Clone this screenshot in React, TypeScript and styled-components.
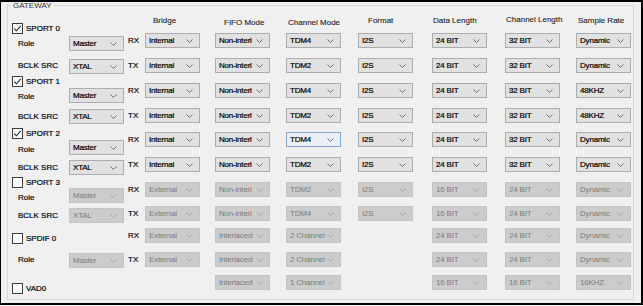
import styled, { createGlobalStyle } from 'styled-components'

const GlobalStyle = createGlobalStyle`
  html, body { margin: 0; padding: 0; background: #fff; }
  body { font-family: "Liberation Sans", Arial, sans-serif; }
`

const Frame = styled.div`
  box-sizing: border-box;
  width: 643px;
  height: 305px;
  border: 2px solid #000;
  border-left-width: 1px;
  background: #f0f0f0;
  padding: 3px 0 0 6px;
  font-size: 8px;
  color: #000;
  -webkit-text-stroke: 0.2px currentColor;
`

const GroupBox = styled.div`
  position: relative;
  box-sizing: border-box;
  width: 627px;
  height: 295px;
  border: 1px solid #d7d7d7;
  display: flex;
  padding-left: 4px;
`

const GroupTitle = styled.span`
  position: absolute;
  top: -4px;
  left: 3px;
  padding: 0 2px;
  line-height: 8px;
  background: #f0f0f0;
  color: #333;
  -webkit-text-stroke: 0;
`

const LeftPanel = styled.div`
  width: 112px;
  display: flex;
  flex-direction: column;
`

const CheckRow = styled.label<{ $mt: number }>`
  display: flex;
  align-items: center;
  gap: 3px;
  height: 11px;
  margin-top: ${p => p.$mt}px;
  font-size: 8px;
`

const Box = styled.span`
  box-sizing: border-box;
  width: 11px;
  height: 11px;
  border: 1px solid #3c3c3c;
  background: #fff;
  display: flex;
  align-items: center;
  justify-content: center;
`

const OptionRow = styled.div<{ $mt: number }>`
  display: flex;
  align-items: center;
  height: 15px;
  margin-top: ${p => p.$mt}px;
`

const OptionLabel = styled.span<{ $ly: number }>`
  width: 57px;
  box-sizing: border-box;
  padding-left: 6px;
  position: relative;
  top: ${p => p.$ly}px;
`

const Select = styled.div<{ $off?: boolean; $focus?: boolean }>`
  box-sizing: border-box;
  width: 55px;
  height: 15px;
  padding: 0 6px 0 3px;
  display: flex;
  align-items: center;
  justify-content: space-between;
  gap: 2px;
  white-space: nowrap;
  overflow: hidden;
  letter-spacing: -0.2px;
  background: ${p => (p.$off ? '#cccccc' : p.$focus ? '#eaf0f6' : '#e1e1e1')};
  border: 1px solid ${p => (p.$off ? '#c4c4c4' : p.$focus ? '#86a9d2' : '#adadad')};
  color: ${p => (p.$off ? '#7c7c7c' : '#000')};
  -webkit-text-stroke: ${p => (p.$off ? '0' : '0.2px currentColor')};
  svg {
    flex: none;
    stroke: ${p => (p.$off ? '#a8a8a8' : '#707070')};
  }
`

const RightPanel = styled.div`
  display: grid;
  grid-template-columns: 21px 70px 71px 72px 74px 73px 71px 55px;
  grid-template-rows: 27px 25px 25px 25px 24px 25px 25px 24px 22px 24px 23px 15px;
`

const Header = styled.div<{ $dx: number; $dy: number }>`
  padding: ${p => p.$dy}px 0 0 ${p => p.$dx}px;
  line-height: 10px;
  white-space: nowrap;
  color: #1a1a1a;
  -webkit-text-stroke: 0.1px currentColor;
`

const IoLabel = styled.div`
  padding-left: 4px;
  height: 15px;
  line-height: 15px;
`

const Chevron = () => (
  <svg width="7" height="4" viewBox="0 0 7 4" fill="none" strokeWidth="1">
    <polyline points="0.5,0.5 3.5,3.5 6.5,0.5" />
  </svg>
)

const Check = () => (
  <svg width="9" height="9" viewBox="0 0 9 9" fill="none" stroke="#222" strokeWidth="1.1">
    <polyline points="1.2,4.6 3.4,6.8 7.8,1.8" />
  </svg>
)

const Dropdown = ({ value, off, focus }: { value: string; off?: boolean; focus?: boolean }) => (
  <Select $off={off} $focus={focus}>
    <span>{value}</span>
    <Chevron />
  </Select>
)

type LeftItem =
  | { kind: 'check'; label: string; checked: boolean; mt: number }
  | { kind: 'opt'; label: string; value: string; off?: boolean; mt: number; ly?: number }

const LEFT: LeftItem[] = [
  { kind: 'check', label: 'SPORT 0', checked: true, mt: 17 },
  { kind: 'opt', label: 'Role', value: 'Master', mt: 2 },
  { kind: 'opt', label: 'BCLK SRC', value: 'XTAL', mt: 8, ly: -1 },
  { kind: 'check', label: 'SPORT 1', checked: true, mt: 2 },
  { kind: 'opt', label: 'Role', value: 'Master', mt: 1, ly: 1 },
  { kind: 'opt', label: 'BCLK SRC', value: 'XTAL', mt: 6 },
  { kind: 'check', label: 'SPORT 2', checked: true, mt: 4 },
  { kind: 'opt', label: 'Role', value: 'Master', mt: 1, ly: 2 },
  { kind: 'opt', label: 'BCLK SRC', value: 'XTAL', mt: 5 },
  { kind: 'check', label: 'SPORT 3', checked: false, mt: 2 },
  { kind: 'opt', label: 'Role', value: 'Master', off: true, mt: 0, ly: 2 },
  { kind: 'opt', label: 'BCLK SRC', value: 'XTAL', off: true, mt: 5 },
  { kind: 'check', label: 'SPDIF 0', checked: false, mt: 10 },
  { kind: 'opt', label: 'Role', value: 'Master', off: true, mt: 9, ly: -1 },
  { kind: 'check', label: 'VAD0', checked: false, mt: 15 },
]

const HEADERS = [
  { text: 'Bridge', dx: 8, dy: 10 },
  { text: 'FIFO Mode', dx: 9, dy: 12 },
  { text: 'Channel Mode', dx: 2, dy: 12 },
  { text: 'Format', dx: 10, dy: 10 },
  { text: 'Data Length', dx: 1, dy: 10 },
  { text: 'Channel Length', dx: 1, dy: 9 },
  { text: 'Sample Rate', dx: 2, dy: 10 },
]

type Row = { io?: string; off?: boolean; focus?: number; cells: (string | null)[] }

const ROWS: Row[] = [
  { io: 'RX', cells: ['Internal', 'Non-interl', 'TDM4', 'I2S', '24 BIT', '32 BIT', 'Dynamic'] },
  { io: 'TX', cells: ['Internal', 'Non-interl', 'TDM2', 'I2S', '24 BIT', '32 BIT', 'Dynamic'] },
  { io: 'RX', cells: ['Internal', 'Non-interl', 'TDM4', 'I2S', '24 BIT', '32 BIT', '48KHZ'] },
  { io: 'TX', cells: ['Internal', 'Non-interl', 'TDM2', 'I2S', '24 BIT', '32 BIT', '48KHZ'] },
  { io: 'RX', focus: 2, cells: ['Internal', 'Non-interl', 'TDM4', 'I2S', '24 BIT', '32 BIT', 'Dynamic'] },
  { io: 'TX', cells: ['Internal', 'Non-interl', 'TDM2', 'I2S', '24 BIT', '32 BIT', 'Dynamic'] },
  { io: 'RX', off: true, cells: ['External', 'Non-interl', 'TDM2', 'I2S', '16 BIT', '24 BIT', 'Dynamic'] },
  { io: 'TX', off: true, cells: ['External', 'Non-interl', 'TDM4', 'I2S', '16 BIT', '24 BIT', 'Dynamic'] },
  { io: 'RX', off: true, cells: ['External', 'Interlaced', '2 Channel', null, '24 BIT', '24 BIT', 'Dynamic'] },
  { io: 'TX', off: true, cells: ['External', 'Interlaced', '2 Channel', null, '24 BIT', '24 BIT', 'Dynamic'] },
  { off: true, cells: [null, 'Interlaced', '1 Channel', null, '16 BIT', '16 BIT', '16KHZ'] },
]

export default function App() {
  return (
    <>
      <GlobalStyle />
      <Frame>
        <GroupBox>
          <GroupTitle>GATEWAY</GroupTitle>
          <LeftPanel>
            {LEFT.map((item, i) =>
              item.kind === 'check' ? (
                <CheckRow key={i} $mt={item.mt}>
                  <Box>{item.checked && <Check />}</Box>
                  {item.label}
                </CheckRow>
              ) : (
                <OptionRow key={i} $mt={item.mt}>
                  <OptionLabel $ly={item.ly ?? 0}>{item.label}</OptionLabel>
                  <Dropdown value={item.value} off={item.off} />
                </OptionRow>
              )
            )}
          </LeftPanel>
          <RightPanel>
            <div />
            {HEADERS.map(h => (
              <Header key={h.text} $dx={h.dx} $dy={h.dy}>
                {h.text}
              </Header>
            ))}
            {ROWS.map((row, r) => [
              <IoLabel key={`io${r}`}>{row.io}</IoLabel>,
              ...row.cells.map((c, j) =>
                c ? (
                  <div key={`${r}-${j}`}>
                    <Dropdown value={c} off={row.off} focus={row.focus === j} />
                  </div>
                ) : (
                  <div key={`${r}-${j}`} />
                )
              ),
            ])}
          </RightPanel>
        </GroupBox>
      </Frame>
    </>
  )
}
